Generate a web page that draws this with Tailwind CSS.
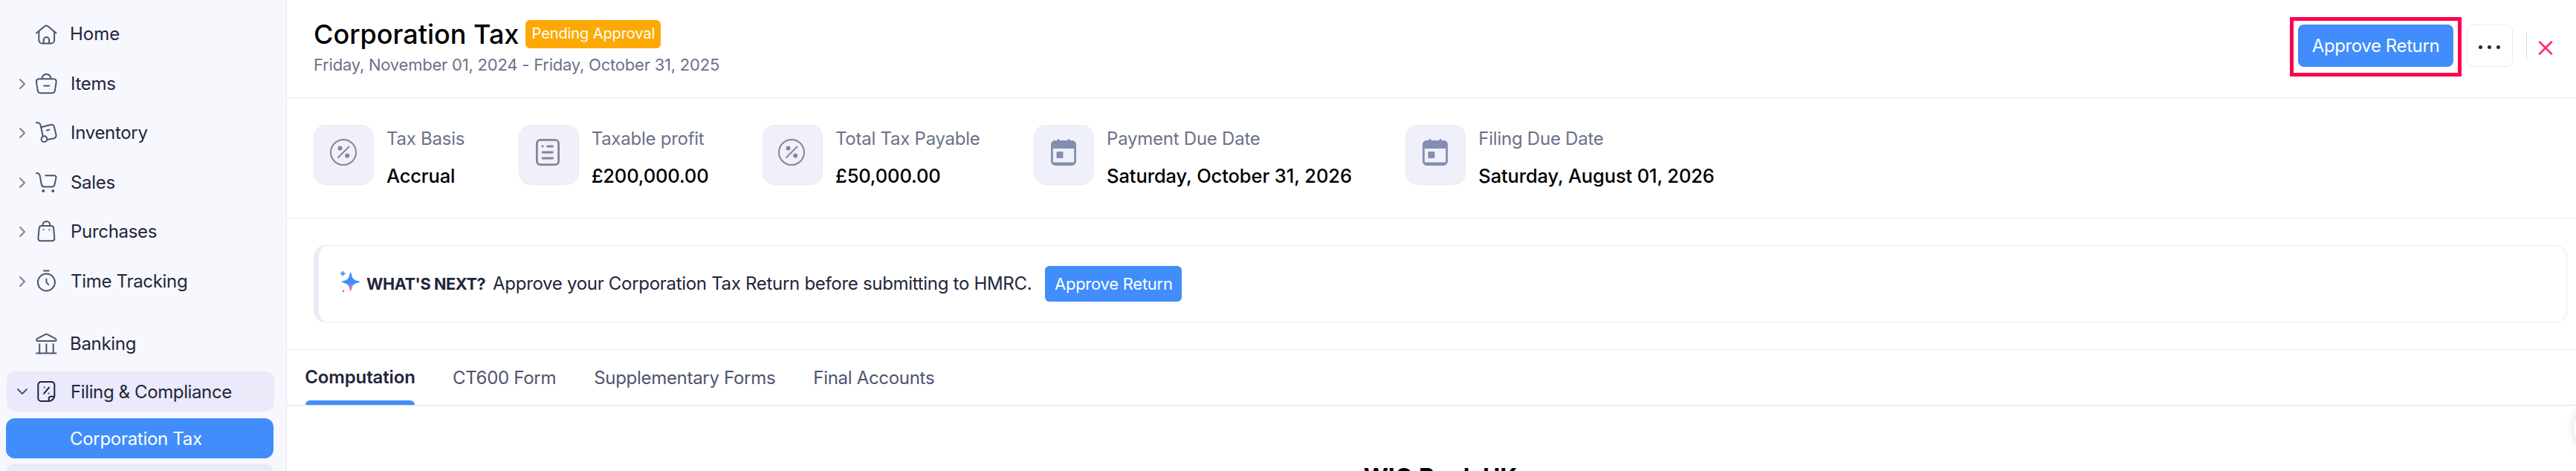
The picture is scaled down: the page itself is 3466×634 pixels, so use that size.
<!DOCTYPE html>
<html lang="en">
<head>
    <meta charset="UTF-8">
    <meta name="viewport" content="width=device-width, initial-scale=1.0">
    <title>Corporation Tax</title>
    <script src="https://cdn.jsdelivr.net/npm/@tailwindcss/browser@4"></script>
    <style>
        body { font-family: 'Inter', sans-serif; }
    </style>
</head>
<body class="bg-white overflow-hidden">

    <!-- Shared icons -->
    <svg class="hidden">
        <symbol id="chevron-right" viewBox="0 0 16 16">
            <path d="M5 2l6 6-6 6" fill="none" stroke="currentColor" stroke-width="1.9" stroke-linecap="round" stroke-linejoin="round"/>
        </symbol>
        <symbol id="percent-circle" viewBox="0 0 36 36">
            <circle cx="18" cy="18" r="17" fill="none" stroke="currentColor" stroke-width="2"/>
            <path d="M25.500 10.500 11 25" stroke="currentColor" stroke-width="2" stroke-linecap="round"/>
            <circle cx="13.500" cy="12.500" r="3" fill="currentColor"/>
            <circle cx="23.200" cy="22.500" r="3" fill="currentColor"/>
        </symbol>
        <symbol id="calendar" viewBox="0 0 36 36">
            <path d="M11 0v4M25 0v4" stroke="currentColor" stroke-width="2.500"/>
            <rect x="2.400" y="3.400" width="31.200" height="31.200" rx="4.500" fill="none" stroke="currentColor" stroke-width="2.800"/>
            <path d="M1 13V8a6 6 0 0 1 6-6h22a6 6 0 0 1 6 6v5z" fill="currentColor"/>
            <path d="M4 33h28" stroke="currentColor" stroke-width="3"/>
            <rect x="8.500" y="17" width="9" height="9" rx="1" fill="currentColor"/>
        </symbol>
    </svg>

    <div class="flex h-[634px] overflow-hidden">
        <!-- Sidebar -->
        <aside class="w-[386px] shrink-0 bg-[#f7f7fe] border-r border-[#e9e9f2] text-2xl tracking-[-0.3px] text-[#21263c] pt-[13px] overflow-hidden">
            <nav>
                <a class="flex items-center h-[66.5px] pl-[46px]">
                    <svg class="w-8 h-8 text-[#4f5470]" viewBox="0 0 32 32" fill="none" stroke="currentColor" stroke-width="2" stroke-linecap="round" stroke-linejoin="round">
                        <path d="M3 14.500 14.200 5.300a3.300 3.300 0 0 1 4.200 0L29.500 14.500"/>
                        <path d="M6.300 12.500v11.500a4.400 4.400 0 0 0 4.400 4.400h12a4.400 4.400 0 0 0 4.400-4.400V12.500"/>
                        <path d="M12.700 28v-4.300a3.700 3.700 0 0 1 7.400 0V28"/>
                    </svg>
                    <span class="ml-4 tracking-normal">Home</span>
                </a>
                <a class="flex items-center h-[66.5px] pl-[22px]">
                    <svg class="w-4 h-4 mr-2 text-[#7f7f93]"><use href="#chevron-right"/></svg>
                    <svg class="w-8 h-8 text-[#4f5470]" viewBox="0 0 32 32" fill="none" stroke="currentColor" stroke-width="2" stroke-linecap="round" stroke-linejoin="round">
                        <path d="M6.300 9.300h20a3.400 3.400 0 0 1 3.400 4l-1.800 11.300a4.400 4.400 0 0 1-4.300 3.700H9a4.400 4.400 0 0 1-4.300-3.700L2.900 13.300a3.400 3.400 0 0 1 3.400-4z"/>
                        <path d="M10.500 9a6 6.300 0 0 1 12 0M13.200 18.500h7"/>
                    </svg>
                    <span class="ml-[17px]">Items</span>
                </a>
                <a class="flex items-center h-[66.5px] pl-[22px]">
                    <svg class="w-4 h-4 mr-2 text-[#7f7f93]"><use href="#chevron-right"/></svg>
                    <svg class="w-8 h-8 text-[#4f5470]" viewBox="0 0 32 32" fill="none" stroke="currentColor" stroke-width="2" stroke-linecap="round" stroke-linejoin="round">
                        <path d="M3 2c3 0 5.200 1 5.700 4L11.800 20.500"/>
                        <path d="M9.300 8.200 22 5a4 4 0 0 1 5 3l2.500 10.500a4 4 0 0 1-3 4.800L17.500 25"/>
                        <circle cx="13.500" cy="24.200" r="3.900"/>
                        <path d="M17 12.500l3.300-.9"/>
                    </svg>
                    <span class="ml-[17px]">Inventory</span>
                </a>
                <a class="flex items-center h-[66.5px] pl-[22px]">
                    <svg class="w-4 h-4 mr-2 text-[#7f7f93]"><use href="#chevron-right"/></svg>
                    <svg class="w-8 h-8 text-[#4f5470]" viewBox="0 0 32 32" fill="none" stroke="currentColor" stroke-width="2" stroke-linecap="round" stroke-linejoin="round">
                        <path d="M3 3c3 0 4.200 1 4.700 3.500L9.800 18.300a4 4 0 0 0 4 3.300h9.600a4.200 4.200 0 0 0 4.100-3.300l2-9a2.500 2.500 0 0 0-2.500-3H15.200"/>
                        <circle cx="12.300" cy="27" r="1" fill="currentColor"/>
                        <circle cx="25.300" cy="27" r="1" fill="currentColor"/>
                    </svg>
                    <span class="ml-[17px]">Sales</span>
                </a>
                <a class="flex items-center h-[66.5px] pl-[22px]">
                    <svg class="w-4 h-4 mr-2 text-[#7f7f93]"><use href="#chevron-right"/></svg>
                    <svg class="w-8 h-8 text-[#4f5470]" viewBox="0 0 32 32" fill="none" stroke="currentColor" stroke-width="2" stroke-linecap="round" stroke-linejoin="round">
                        <path d="M10 8h12.800a3.300 3.300 0 0 1 3.300 3l1.200 14a3 3 0 0 1-3 3.200H8.400a3 3 0 0 1-3-3.200l1.300-14A3.300 3.300 0 0 1 10 8z"/>
                        <path d="M11.700 7.800v-1.200a4.700 4.700 0 0 1 9.400 0v1.200"/>
                        <path d="M12.600 13.200v.1M20.300 13.200v.1"/>
                    </svg>
                    <span class="ml-[17px]">Purchases</span>
                </a>
                <a class="flex items-center h-[66.5px] pl-[22px]">
                    <svg class="w-4 h-4 mr-2 text-[#7f7f93]"><use href="#chevron-right"/></svg>
                    <svg class="w-8 h-8 text-[#4f5470]" viewBox="0 0 32 32" fill="none" stroke="currentColor" stroke-width="2" stroke-linecap="round" stroke-linejoin="round">
                        <circle cx="16.400" cy="17" r="11.500"/>
                        <path d="M13 1.500h6.800M16.400 12.500v4.300l2.800 3.300"/>
                    </svg>
                    <span class="ml-[17px]">Time Tracking</span>
                </a>
                <a class="flex items-center h-[66.5px] mt-[18px] pl-[46px]">
                    <svg class="w-8 h-8 text-[#4f5470]" viewBox="0 0 32 32" fill="none" stroke="currentColor" stroke-width="2" stroke-linejoin="round">
                        <path d="M4.500 12h23.800c1.600 0 1.800-2.500.400-3.200L18.200 3.300a3.800 3.800 0 0 0-3.600 0L4.100 8.800c-1.400.7-1.200 3.200.4 3.200z"/>
                        <path d="M7.200 15.500v13M16.400 15.500v13M25.700 15.500v13M2.200 28.500h28"/>
                    </svg>
                    <span class="ml-4">Banking</span>
                </a>
                <a class="flex items-center w-[360px] h-[54px] mt-[3.5px] ml-[9px] pl-[13px] rounded-xl bg-[#ebeafb]">
                    <svg class="w-4 h-4 mr-2 rotate-90 text-[#4f5470]"><use href="#chevron-right"/></svg>
                    <svg class="w-8 h-8" viewBox="0 0 32 32" fill="none" stroke="currentColor" stroke-width="2" stroke-linecap="round" stroke-linejoin="round">
                        <path d="M19.500 29H9.300a4 4 0 0 1-4-4V7a4 4 0 0 1 4-4h14a4 4 0 0 1 4 4v15.500c0 3-4 6.500-7.800 6.500z"/>
                        <path d="M19.700 28.500v-3.200a2.500 2.500 0 0 1 2.500-2.500h4.500"/>
                        <path d="M20 10.500 13 18.800M13.700 10.500v.1M19.500 18.500v.1"/>
                    </svg>
                    <span class="ml-[17px] pt-px tracking-[-0.38px]">Filing &amp; Compliance</span>
                </a>
                <a class="flex items-center w-[360px] h-[54px] mt-[9px] ml-2 pl-[86px] pt-px rounded-xl bg-[#408dfb] text-white">Corporation Tax</a>
                <a class="block w-[360px] h-[54px] mt-[7px] ml-2 rounded-xl bg-[#ebeafb]"></a>
            </nav>
        </aside>

        <!-- Main Content -->
        <main class="flex-1 min-w-0 bg-white">
            <header class="flex justify-between h-[132px] border-b border-[#e9e9f0] pl-9 pr-[31px]">
                <div class="pt-6">
                    <div class="flex items-center h-11">
                        <h1 class="text-4xl font-medium text-black whitespace-nowrap">Corporation Tax</h1>
                        <span class="flex items-center justify-center w-[182px] h-[38px] ml-[9px] pb-[2px] rounded-md bg-[#fca904] text-xl tracking-[-0.1px] text-white">Pending Approval</span>
                    </div>
                    <p class="text-[22px] leading-[38px] tracking-[-0.22px] text-[#6c718a]">Friday, November 01, 2024 - Friday, October 31, 2025</p>
                </div>
                <div class="flex items-start pt-[33px]">
                    <div class="relative">
                        <button class="block w-[209px] h-[57px] rounded-lg bg-[#408dfb] text-2xl tracking-[-0.4px] text-white">Approve Return</button>
                        <div class="absolute -left-[11px] -right-[11px] -top-[10px] -bottom-[13px] border-[5px] border-[#ff0050]"></div>
                    </div>
                    <button class="flex items-center justify-center gap-[7px] w-[62px] h-[57px] ml-[18px] pt-1 pr-px rounded-lg border border-[#ebeaf2]">
                        <i class="w-[5px] h-[5px] rounded-full bg-[#21263c]"></i>
                        <i class="w-[5px] h-[5px] rounded-full bg-[#21263c]"></i>
                        <i class="w-[5px] h-[5px] rounded-full bg-[#21263c]"></i>
                    </button>
                    <div class="w-px h-[37px] mt-[10px] ml-[18px] bg-[#dcdce4]"></div>
                    <svg class="w-5 h-5 mt-[21px] ml-[15px]" viewBox="0 0 20 20" fill="none" stroke="#ff2d5e" stroke-width="2.500" stroke-linecap="round">
                        <path d="M2 2.500l16 16M18 2.500l-16 16"/>
                    </svg>
                </div>
            </header>

            <!-- Summary -->
            <section class="flex gap-[72.5px] h-[162px] pt-9 pl-9 border-b border-[#e9e9f0] whitespace-nowrap">
                <div class="flex">
                    <div class="flex justify-center w-[81px] h-[81px] pt-[18px] pr-[2px] rounded-2xl border border-[#eaeaf4] bg-[#f0f0fa] text-[#85839a]">
                        <svg class="w-9 h-9"><use href="#percent-circle"/></svg>
                    </div>
                    <div class="ml-[17px] pt-px">
                        <p class="text-2xl leading-9 tracking-[-0.25px] text-[#6c718a]">Tax Basis</p>
                        <p class="mt-[14px] text-[25.5px] leading-9 font-medium tracking-[-0.15px] text-black">Accrual</p>
                    </div>
                </div>
                <div class="flex">
                    <div class="flex justify-center w-[81px] h-[81px] pt-[18px] pr-[2px] rounded-2xl border border-[#eaeaf4] bg-[#f0f0fa] text-[#85839a]">
                        <svg class="w-9 h-9" viewBox="0 0 36 36" fill="none" stroke="currentColor" stroke-width="2.800" stroke-linecap="round">
                            <rect x="3.400" y="1.400" width="29.200" height="33.200" rx="4.500"/>
                            <path d="M11 10h.1M17.500 10h7M11 18h13.500M11 26h13.500"/>
                        </svg>
                    </div>
                    <div class="ml-[17px] pt-px">
                        <p class="text-2xl leading-9 tracking-[-0.25px] text-[#6c718a]">Taxable profit</p>
                        <p class="mt-[14px] text-[25.5px] leading-9 font-medium tracking-[-0.15px] text-black">£200,000.00</p>
                    </div>
                </div>
                <div class="flex">
                    <div class="flex justify-center w-[81px] h-[81px] pt-[18px] pr-[2px] rounded-2xl border border-[#eaeaf4] bg-[#f0f0fa] text-[#85839a]">
                        <svg class="w-9 h-9"><use href="#percent-circle"/></svg>
                    </div>
                    <div class="ml-[17px] pt-px">
                        <p class="text-2xl leading-9 tracking-[-0.25px] text-[#6c718a]">Total Tax Payable</p>
                        <p class="mt-[14px] text-[25.5px] leading-9 font-medium tracking-[-0.15px] text-black">£50,000.00</p>
                    </div>
                </div>
                <div class="flex">
                    <div class="flex justify-center w-[81px] h-[81px] pt-[18px] pr-[2px] rounded-2xl border border-[#eaeaf4] bg-[#f0f0fa] text-[#848eb3]">
                        <svg class="w-9 h-9"><use href="#calendar"/></svg>
                    </div>
                    <div class="ml-[17px] pt-px">
                        <p class="text-2xl leading-9 tracking-[-0.25px] text-[#6c718a]">Payment Due Date</p>
                        <p class="mt-[14px] text-[25.5px] leading-9 font-medium tracking-[-0.1px] text-black">Saturday, October 31, 2026</p>
                    </div>
                </div>
                <div class="flex">
                    <div class="flex justify-center w-[81px] h-[81px] pt-[18px] pr-[2px] rounded-2xl border border-[#eaeaf4] bg-[#f0f0fa] text-[#848eb3]">
                        <svg class="w-9 h-9"><use href="#calendar"/></svg>
                    </div>
                    <div class="ml-[17px] pt-px">
                        <p class="text-2xl leading-9 tracking-[-0.25px] text-[#6c718a]">Filing Due Date</p>
                        <p class="mt-[14px] text-[25.5px] leading-9 font-medium tracking-[-0.15px] text-black">Saturday, August 01, 2026</p>
                    </div>
                </div>
            </section>

            <!-- What's next -->
            <section class="h-[177px] pt-9 pl-9 pr-3 border-b border-[#ebeaf2]">
                <div class="flex items-center h-[104px] pl-7 rounded-2xl border border-l-[7px] border-[#ebeaf2] text-[#21263c] whitespace-nowrap">
                    <svg class="w-7 h-[30px] mb-1" viewBox="0 0 28 30">
                        <defs>
                            <radialGradient id="spark" cx="0.5" cy="1" r="0.5">
                                <stop offset="0" stop-color="#ff5c93"/>
                                <stop offset="0.4" stop-color="#c47fd0"/>
                                <stop offset="0.9" stop-color="#408dfb"/>
                            </radialGradient>
                        </defs>
                        <path d="M14.800 2.500C16 10 18 12.800 26.200 14.300C18 16 16.300 18.500 14.800 26C13.200 18.500 11.500 16 3.500 14.300C11.500 12.800 13.500 10 14.800 2.500z" fill="url(#spark)" stroke="url(#spark)" stroke-width="1.500" stroke-linejoin="round"/>
                        <path d="M4.300 0v6.600M1 3.300h6.600" stroke="#408dfb" stroke-width="1.900"/>
                        <circle cx="5" cy="27" r="1.400" fill="#ff5c93"/>
                    </svg>
                    <b class="ml-2 text-[21.6px] font-bold tracking-[-0.4px]">WHAT'S NEXT?</b>
                    <span class="ml-[10px] text-2xl tracking-[-0.3px]">Approve your Corporation Tax Return before submitting to HMRC.</span>
                    <button class="w-[184px] h-12 ml-[18px] rounded-md bg-[#408dfb] text-[22px] tracking-[-0.25px] text-white">Approve Return</button>
                </div>
            </section>

            <!-- Tabs -->
            <nav class="flex items-center gap-[51px] h-[75px] pl-[25px] border-b border-[#dcdce4] text-2xl tracking-[-0.3px] text-[#4f5470] whitespace-nowrap">
                <a class="relative flex items-center justify-center w-[147px] h-full font-semibold tracking-[-0.15px] text-[#21263c]">
                    Computation
                    <i class="absolute left-0 bottom-0 w-full h-[6px] rounded-t-md bg-[#408dfb]"></i>
                </a>
                <a class="pt-[2px]">CT600 Form</a>
                <a class="pt-[2px]">Supplementary Forms</a>
                <a class="pt-[2px]">Final Accounts</a>
            </nav>

            <div class="relative pt-[77px] pl-6">
                <h2 class="text-[32px] leading-10 font-bold text-black text-center">WIO Bank UK</h2>
                <!-- Help bubble peeking in from the right edge -->
                <div class="absolute top-[-9px] -right-[76px] w-20 h-20 rounded-full bg-white border border-[#ebeaf2] shadow-[0_0_12px_rgba(0,0,0,0.12)]"></div>
            </div>
        </main>
    </div>
</body>
</html>
